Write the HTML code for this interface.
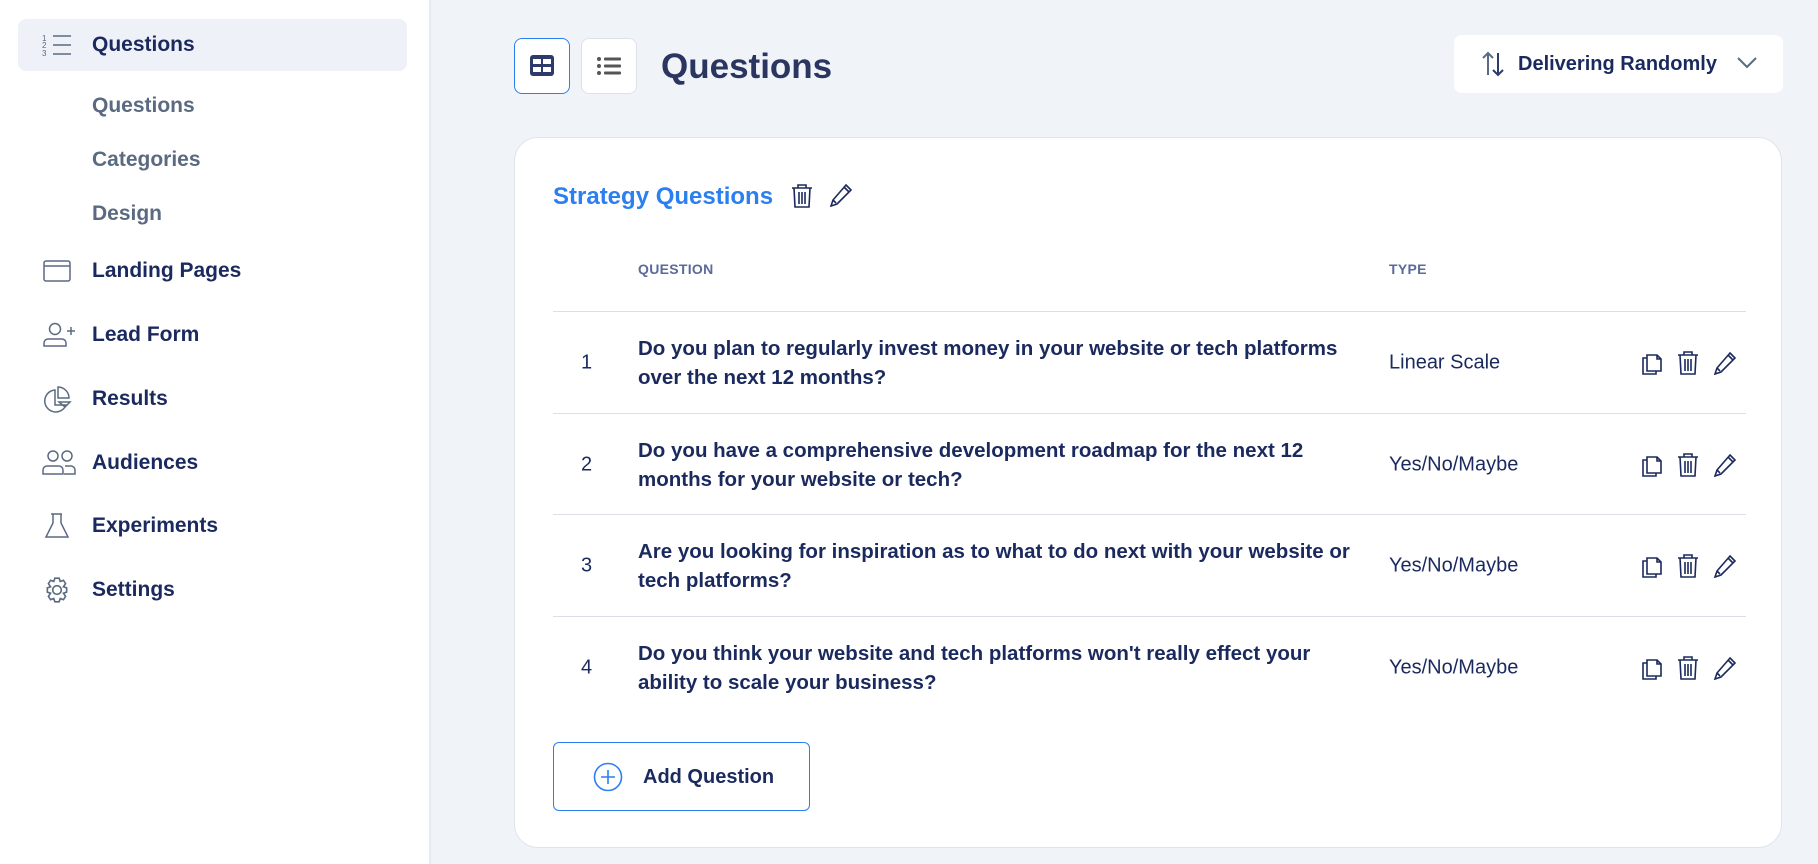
<!DOCTYPE html>
<html><head><meta charset="utf-8"><style>
*{box-sizing:border-box;margin:0;padding:0}
body{width:1818px;height:864px;background:#f0f3f8;font-family:"Liberation Sans",sans-serif;color:#1b2a5e;position:relative;overflow:hidden}
.side{position:absolute;left:0;top:0;width:431px;height:864px;background:#fff;border-right:2px solid #e6eaf2}
.act{position:absolute;left:18px;top:19px;width:389px;height:52px;background:#eff1f8;border-radius:8px}
.ni{position:absolute;left:92px;font-size:21px;font-weight:bold;color:#1b2a5e;transform:translateY(-50%)}
.sub{color:#5a6a80}
.ic{position:absolute;left:42px;transform:translateY(-50%)}
.btn{position:absolute;top:38px;width:56px;height:56px;background:#fff;border:1px solid #dde2ea;border-radius:8px;display:flex;align-items:center;justify-content:center}
.card{position:absolute;left:514px;top:137px;width:1268px;height:711px;background:#fff;border:1px solid #dfe4ec;border-radius:24px}
.hl{position:absolute;left:38px;width:1193px;height:1px;background:#dcdfe5}
.th{position:absolute;font-size:14px;font-weight:bold;color:#5a6a9a;top:123px;letter-spacing:.3px}
.num{position:absolute;left:66px;font-size:20px;transform:translateY(-50%)}
.q{position:absolute;left:123px;font-size:20.5px;font-weight:bold;line-height:29px;transform:translateY(-50%);white-space:nowrap}
.t{position:absolute;left:874px;font-size:20px;transform:translateY(-50%)}
.acts{position:absolute;left:1126px;transform:translateY(-50%);display:flex;gap:14px}
</style></head><body>
<div class="side">
<div class="act"></div>
<svg class="ic" style="top:45px" width="30" height="24" viewBox="0 0 30 24" fill="none" stroke="#5a6a80" stroke-width="1.5"><path d="M11 3h18M11 12h18M11 21h18"/><text x="0" y="8" font-size="8" fill="#5a6a80" stroke="none">1</text><text x="0" y="15" font-size="8" fill="#5a6a80" stroke="none">2</text><text x="0" y="23" font-size="8" fill="#5a6a80" stroke="none">3</text></svg>
<div class="ni" style="top:45px">Questions</div>
<div class="ni sub" style="top:106px">Questions</div>
<div class="ni sub" style="top:160px">Categories</div>
<div class="ni sub" style="top:214px">Design</div>
<svg class="ic" style="top:271px" width="30" height="24" viewBox="0 0 30 24" fill="none" stroke="#5a6a80" stroke-width="1.5"><rect x="2" y="2" width="26" height="20" rx="2"/><path d="M2 7h26"/></svg>
<div class="ni" style="top:271px">Landing Pages</div>
<svg class="ic" style="top:335px" width="34" height="26" viewBox="0 0 34 26" fill="none" stroke="#5a6a80" stroke-width="1.5"><circle cx="13" cy="7" r="5.5"/><path d="M2 24v-3a4 4 0 014-4h14a4 4 0 014 4v3z"/><path d="M25 9h8M29 5v8"/></svg>
<div class="ni" style="top:335px">Lead Form</div>
<svg class="ic" style="top:399px" width="30" height="28" viewBox="0 0 30 28" fill="none" stroke="#5a6a80" stroke-width="1.5"><path d="M13 5a11 11 0 1 0 11 15H13z"/><path d="M16 2a11 11 0 0 1 11 11H16z"/><path d="M17 17h11l-5 5z"/></svg>
<div class="ni" style="top:399px">Results</div>
<svg class="ic" style="top:463px" width="34" height="26" viewBox="0 0 34 26" fill="none" stroke="#5a6a80" stroke-width="1.5"><circle cx="11" cy="6" r="5"/><circle cx="25" cy="6" r="5"/><path d="M1 24v-4a4 4 0 014-4h12a4 4 0 014 4v4z"/><path d="M23 16h6a4 4 0 014 4v4h-11"/></svg>
<div class="ni" style="top:463px">Audiences</div>
<svg class="ic" style="top:526px" width="30" height="28" viewBox="0 0 30 28" fill="none" stroke="#5a6a80" stroke-width="1.5"><path d="M9 2h11M11 2v9L4 25h22L19 11V2"/></svg>
<div class="ni" style="top:526px">Experiments</div>
<svg class="ic" style="top:590px" width="30" height="28" viewBox="0 0 28 26" fill="none" stroke="#5a6a80" stroke-width="1.5"><circle cx="14" cy="13" r="4"/><path d="M12 2h4l1 3 3-1 2 3-2 3 3 1v4l-3 1 2 3-2 3-3-1-1 3h-4l-1-3-3 1-2-3 2-3-3-1v-4l3-1-2-3 2-3 3 1z"/></svg>
<div class="ni" style="top:590px">Settings</div>
</div>

<div class="btn" style="left:514px;border-color:#2b7ff0"><svg width="24" height="22" viewBox="0 0 24 22"><rect x="0" y="0" width="24" height="21" rx="3" fill="#2d3a6a"/><path d="M3 9h8v-5h-8zM13 4h8v5h-8zM3 12h8v5h-8zM13 12h8v5h-8z" fill="#fff"/></svg></div>
<div class="btn" style="left:581px"><svg width="26" height="20" viewBox="0 0 26 20" fill="#555"><circle cx="3" cy="3" r="2"/><circle cx="3" cy="10" r="2"/><circle cx="3" cy="17" r="2"/><rect x="8" y="1.5" width="17" height="3" rx="1"/><rect x="8" y="8.5" width="17" height="3" rx="1"/><rect x="8" y="15.5" width="17" height="3" rx="1"/></svg></div>
<div style="position:absolute;left:661px;top:47px;font-size:35px;font-weight:bold;color:#2a3560">Questions</div>

<div style="position:absolute;left:1454px;top:35px;width:329px;height:58px;background:#fff;border-radius:8px">
<svg style="position:absolute;left:28px;top:16px" width="22" height="26" viewBox="0 0 22 26" fill="none" stroke="#5a6a80" stroke-width="2"><path d="M6 24V2M1 7l5-5 5 5"/><path d="M16 2v22M11 19l5 5 5-5" stroke="#2d3a6a"/></svg>
<div style="position:absolute;left:64px;top:18px;font-size:20px;font-weight:bold;color:#1b2a5e">Delivering Randomly</div>
<svg style="position:absolute;left:283px;top:22px" width="20" height="12" viewBox="0 0 20 12" fill="none" stroke="#5a6a80" stroke-width="2"><path d="M1 1l9 9 9-9"/></svg>
</div>

<div class="card">
<div style="position:absolute;left:38px;top:45px;font-size:24px;font-weight:bold;color:#2b7ff0">Strategy Questions</div>
<svg style="position:absolute;left:276px;top:45px" width="22" height="26" viewBox="0 0 22 26" fill="none" stroke="#1b2a5e" stroke-width="1.6"><path d="M1 5h20M7 5V2h8v3M3 5l1 19h14l1-19M8 9v12M11 9v12M14 9v12"/></svg>
<svg style="position:absolute;left:314px;top:45px" width="24" height="24" viewBox="0 0 24 24" fill="none" stroke="#1b2a5e" stroke-width="1.6"><path d="M17 2l5 5L8 21l-6 2 2-6z M15 4l5 5M4 17l3 3"/></svg>
<div class="th" style="left:123px">QUESTION</div>
<div class="th" style="left:874px">TYPE</div>
<div class="hl" style="top:173px"></div>
<div class="hl" style="top:275px"></div>
<div class="hl" style="top:376px"></div>
<div class="hl" style="top:478px"></div>

<div class="num" style="top:225px">1</div>
<div class="q" style="top:225px">Do you plan to regularly invest money in your website or tech platforms<br>over the next 12 months?</div>
<div class="t" style="top:225px">Linear Scale</div>
<div class="num" style="top:327px">2</div>
<div class="q" style="top:327px">Do you have a comprehensive development roadmap for the next 12<br>months for your website or tech?</div>
<div class="t" style="top:327px">Yes/No/Maybe</div>
<div class="num" style="top:428px">3</div>
<div class="q" style="top:428px">Are you looking for inspiration as to what to do next with your website or<br>tech platforms?</div>
<div class="t" style="top:428px">Yes/No/Maybe</div>
<div class="num" style="top:530px">4</div>
<div class="q" style="top:530px">Do you think your website and tech platforms won't really effect your<br>ability to scale your business?</div>
<div class="t" style="top:530px">Yes/No/Maybe</div>

<div class="acts" style="top:225px"><svg width="22" height="24" viewBox="0 0 22 24" fill="none" stroke="#1b2a5e" stroke-width="1.6"><path d="M6 4h10l4 4v12H6z M16 4v4h4M6 7H2v16h13v-3"/></svg><svg width="22" height="24" viewBox="0 0 22 24" fill="none" stroke="#1b2a5e" stroke-width="1.6"><path d="M1 4h20M7 4V1h8v3M3 4l1 19h14l1-19M8 8v12M11 8v12M14 8v12"/></svg><svg width="24" height="24" viewBox="0 0 24 24" fill="none" stroke="#1b2a5e" stroke-width="1.6"><path d="M17 2l5 5L8 21l-6 2 2-6z M15 4l5 5M4 17l3 3"/></svg></div>
<div class="acts" style="top:327px"><svg width="22" height="24" viewBox="0 0 22 24" fill="none" stroke="#1b2a5e" stroke-width="1.6"><path d="M6 4h10l4 4v12H6z M16 4v4h4M6 7H2v16h13v-3"/></svg><svg width="22" height="24" viewBox="0 0 22 24" fill="none" stroke="#1b2a5e" stroke-width="1.6"><path d="M1 4h20M7 4V1h8v3M3 4l1 19h14l1-19M8 8v12M11 8v12M14 8v12"/></svg><svg width="24" height="24" viewBox="0 0 24 24" fill="none" stroke="#1b2a5e" stroke-width="1.6"><path d="M17 2l5 5L8 21l-6 2 2-6z M15 4l5 5M4 17l3 3"/></svg></div>
<div class="acts" style="top:428px"><svg width="22" height="24" viewBox="0 0 22 24" fill="none" stroke="#1b2a5e" stroke-width="1.6"><path d="M6 4h10l4 4v12H6z M16 4v4h4M6 7H2v16h13v-3"/></svg><svg width="22" height="24" viewBox="0 0 22 24" fill="none" stroke="#1b2a5e" stroke-width="1.6"><path d="M1 4h20M7 4V1h8v3M3 4l1 19h14l1-19M8 8v12M11 8v12M14 8v12"/></svg><svg width="24" height="24" viewBox="0 0 24 24" fill="none" stroke="#1b2a5e" stroke-width="1.6"><path d="M17 2l5 5L8 21l-6 2 2-6z M15 4l5 5M4 17l3 3"/></svg></div>
<div class="acts" style="top:530px"><svg width="22" height="24" viewBox="0 0 22 24" fill="none" stroke="#1b2a5e" stroke-width="1.6"><path d="M6 4h10l4 4v12H6z M16 4v4h4M6 7H2v16h13v-3"/></svg><svg width="22" height="24" viewBox="0 0 22 24" fill="none" stroke="#1b2a5e" stroke-width="1.6"><path d="M1 4h20M7 4V1h8v3M3 4l1 19h14l1-19M8 8v12M11 8v12M14 8v12"/></svg><svg width="24" height="24" viewBox="0 0 24 24" fill="none" stroke="#1b2a5e" stroke-width="1.6"><path d="M17 2l5 5L8 21l-6 2 2-6z M15 4l5 5M4 17l3 3"/></svg></div>

<div style="position:absolute;left:38px;top:604px;width:257px;height:69px;border:1.5px solid #2b7ff0;border-radius:6px">
<svg style="position:absolute;left:39px;top:19px" width="30" height="30" viewBox="0 0 30 30" fill="none" stroke="#2b7ff0" stroke-width="1.6"><circle cx="15" cy="15" r="13.5"/><path d="M15 8v14M8 15h14"/></svg>
<div style="position:absolute;left:89px;top:23px;font-size:20px;font-weight:bold;color:#1b2a5e">Add Question</div>
</div>
</div>
</body></html>
